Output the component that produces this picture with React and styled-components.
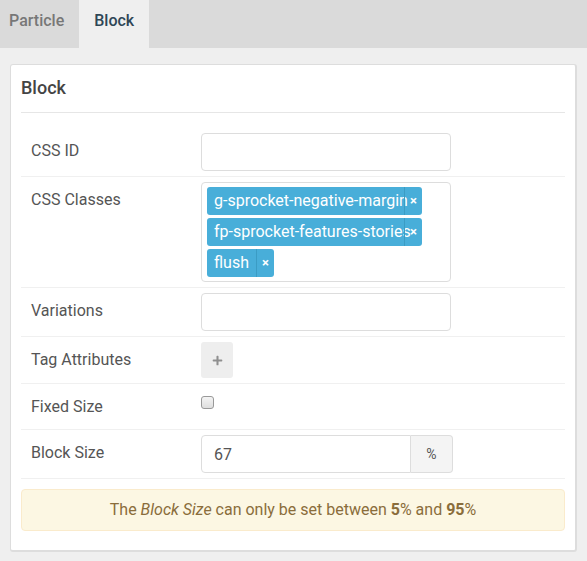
import React from "react";
import styled, { createGlobalStyle } from "styled-components";
import { FaPlus } from "react-icons/fa";

const GlobalStyle = createGlobalStyle`
  body {
    margin: 0;
    background: #efefef;
    font-family: Roboto, "Liberation Sans", sans-serif;
    font-size: 16px;
    color: #555;
  }
`;

const TabBar = styled.div`
  display: flex;
  height: 48px;
  background: #dadada;
`;

const Tab = styled.div`
  padding: 9px 15px 0;
  line-height: 24px;
  font-weight: 500;
  color: ${(p) => (p.active ? "#2e4656" : "#777")};
  background: ${(p) => (p.active ? "#efefef" : "transparent")};
  &:first-child {
    padding-left: 9px;
  }
`;

const Card = styled.div`
  margin: 16px 10px 10px;
  background: #fff;
  border: 1px solid #ddd;
  border-bottom-width: 2px;
  border-right-width: 2px;
  border-radius: 3px;
  padding: 0 10px 19px;
`;

const CardTitle = styled.h3`
  margin: 0;
  padding: 11px 0 12px;
  line-height: 24px;
  font-size: 18px;
  font-weight: 500;
  color: #444;
  border-bottom: 1px solid #e6e6e6;
`;

const Fields = styled.div`
  padding-top: 15px;
`;

const Row = styled.div`
  display: flex;
  align-items: flex-start;
  padding: 5px 10px;
  border-bottom: 1px solid #f0f0f0;
`;

const Label = styled.div`
  width: 170px;
  flex: none;
  line-height: 35px;
  color: #555;
`;

const TextInput = styled.input`
  box-sizing: border-box;
  width: 250px;
  height: 38px;
  border: 1px solid #ddd;
  border-radius: 4px;
  padding: 0 12px;
  font: inherit;
  color: #555;
  outline: none;
`;

const TagBox = styled.div`
  box-sizing: border-box;
  width: 250px;
  border: 1px solid #ddd;
  border-radius: 4px;
  padding: 4px 5px 1px;
  display: flex;
  flex-wrap: wrap;
`;

const Tag = styled.div`
  position: relative;
  max-width: 215px;
  height: 28px;
  line-height: 28px;
  padding: 0 25px 0 7px;
  margin: 0 3px 3px 0;
  box-sizing: border-box;
  background: #48aed9;
  color: #fff;
  border-radius: 3px;
  white-space: nowrap;
  overflow: hidden;
`;

const Remove = styled.span`
  position: absolute;
  top: 0;
  right: 0;
  width: 17px;
  height: 28px;
  border-left: 1px solid #3b9cc4;
  font-size: 13px;
  font-weight: bold;
  text-align: center;
`;

const PlusButton = styled.button`
  width: 32px;
  height: 36px;
  border: none;
  border-radius: 3px;
  background: #eee;
  color: #8f8f8f;
  display: flex;
  align-items: center;
  justify-content: center;
  padding: 0;
`;

const Check = styled.input`
  appearance: none;
  margin: 7px 0 0;
  width: 13px;
  height: 13px;
  border: 1px solid #999;
  border-radius: 3px;
  background: linear-gradient(#f4f4f4, #dedede);
`;

const InputGroup = styled.div`
  display: flex;
  width: 252px;
`;

const GroupInput = styled(TextInput)`
  width: 210px;
  border-radius: 4px 0 0 4px;
`;

const Addon = styled.div`
  box-sizing: border-box;
  width: 42px;
  height: 38px;
  border: 1px solid #ddd;
  border-left: none;
  border-radius: 0 4px 4px 0;
  background: #f4f4f4;
  display: flex;
  align-items: center;
  justify-content: center;
  font-size: 14px;
  color: #555;
`;

const Alert = styled.div`
  margin-top: 10px;
  padding: 10px;
  line-height: 20px;
  text-align: center;
  background: #fcf7e3;
  border: 1px solid #faebcc;
  border-radius: 4px;
  color: #8a6d3b;
`;

const tags = [
  "g-sprocket-negative-margin",
  "fp-sprocket-features-stories",
  "flush",
];

export default function App() {
  return (
    <>
      <GlobalStyle />
      <TabBar>
        <Tab>Particle</Tab>
        <Tab active>Block</Tab>
      </TabBar>
      <Card>
        <CardTitle>Block</CardTitle>
        <Fields>
          <Row>
            <Label>CSS ID</Label>
            <TextInput />
          </Row>
          <Row>
            <Label>CSS Classes</Label>
            <TagBox>
              {tags.map((t) => (
                <Tag key={t}>
                  {t}
                  <Remove>×</Remove>
                </Tag>
              ))}
            </TagBox>
          </Row>
          <Row>
            <Label>Variations</Label>
            <TextInput />
          </Row>
          <Row>
            <Label>Tag Attributes</Label>
            <PlusButton>
              <FaPlus size={11} />
            </PlusButton>
          </Row>
          <Row>
            <Label>Fixed Size</Label>
            <Check type="checkbox" />
          </Row>
          <Row>
            <Label>Block Size</Label>
            <InputGroup>
              <GroupInput defaultValue="67" />
              <Addon>%</Addon>
            </InputGroup>
          </Row>
        </Fields>
        <Alert>
          The <em>Block Size</em> can only be set between <b>5</b>% and <b>95</b>%
        </Alert>
      </Card>
    </>
  );
}
